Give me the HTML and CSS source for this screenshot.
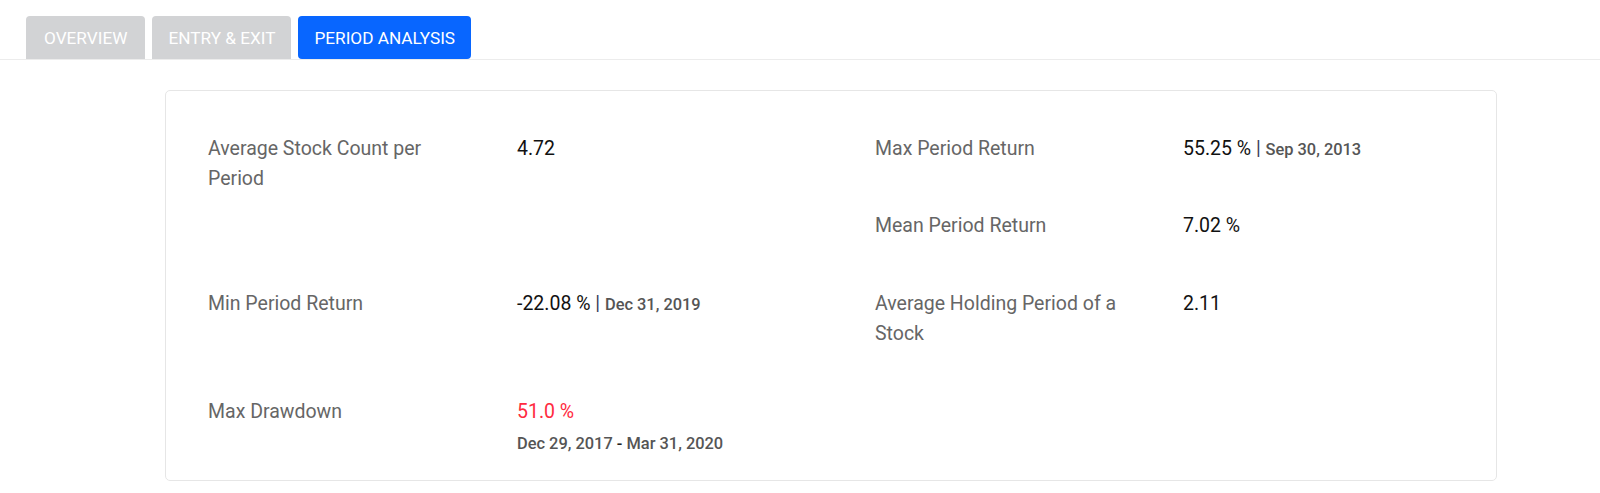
FILE: index.html
```html
<!DOCTYPE html>
<html lang="en">
<head>
<meta charset="utf-8">
<title>Period Analysis</title>
<link rel="stylesheet" href="styles.css">
</head>
<body>
  <nav class="tabs">
    <button class="tab">OVERVIEW</button>
    <button class="tab">ENTRY &amp; EXIT</button>
    <button class="tab tab-active">PERIOD ANALYSIS</button>
  </nav>
  <section class="card">
    <div class="stats">
      <div class="stat stat-l1">
        <div class="label">Average Stock Count per Period</div>
        <div class="value">4.72</div>
      </div>
      <div class="stat stat-r1">
        <div class="label">Max Period Return</div>
        <div class="value">55.25 % <span class="sep">|</span> <span class="date">Sep 30, 2013</span></div>
      </div>
      <div class="stat stat-r2">
        <div class="label">Mean Period Return</div>
        <div class="value">7.02 %</div>
      </div>
      <div class="stat stat-l3">
        <div class="label">Min Period Return</div>
        <div class="value">-22.08 % <span class="sep">|</span> <span class="date">Dec 31, 2019</span></div>
      </div>
      <div class="stat stat-r3">
        <div class="label">Average Holding Period of a Stock</div>
        <div class="value">2.11</div>
      </div>
      <div class="stat stat-l4">
        <div class="label">Max Drawdown</div>
        <div class="value">
          <div class="neg">51.0 %</div>
          <div class="date range">Dec 29, 2017 <span class="dash">-</span> Mar 31, 2020</div>
        </div>
      </div>
    </div>
  </section>
</body>
</html>
```

FILE: styles.css
```css
* { box-sizing: border-box; }

html, body {
  margin: 0;
  padding: 0;
  background: #ffffff;
  font-family: Roboto, "Liberation Sans", Arial, sans-serif;
}

.tabs {
  display: flex;
  gap: 7px;
  padding: 16px 0 0 26px;
  border-bottom: 1px solid #ececec;
}

.tab {
  height: 43px;
  padding: 0 16px;
  border: none;
  border-radius: 4px 4px 0 0;
  background: #d2d3d5;
  color: #ffffff;
  font-family: Roboto, "Liberation Sans", Arial, sans-serif;
  font-size: 17.2px;
  font-weight: 400;
  cursor: pointer;
}

.tab:first-child {
  padding: 0 18px;
}

.tab-active {
  background: #0866ff;
  color: #ffffff;
  border-radius: 4px;
}

.card {
  margin: 30px 103px 0 165px;
  border: 1px solid #e6e6e6;
  border-radius: 5px;
  padding: 43px 43px 20px 42px;
}

.stats {
  display: grid;
  grid-template-columns: 309px 358px 308px 1fr;
  grid-template-rows: 77px 78px 108px auto;
  font-size: 19.5px;
  line-height: 30px;
}

.stat {
  display: contents;
}

.label {
  color: #666666;
}

.value {
  color: #111111;
}

.stat-l1 .label { grid-column: 1; grid-row: 1; padding-right: 40px; }
.stat-l1 .value { grid-column: 2; grid-row: 1; }
.stat-r1 .label { grid-column: 3; grid-row: 1; }
.stat-r1 .value { grid-column: 4; grid-row: 1; }
.stat-r2 .label { grid-column: 3; grid-row: 2; }
.stat-r2 .value { grid-column: 4; grid-row: 2; }
.stat-l3 .label { grid-column: 1; grid-row: 3; }
.stat-l3 .value { grid-column: 2; grid-row: 3; }
.stat-r3 .label { grid-column: 3; grid-row: 3; padding-right: 30px; }
.stat-r3 .value { grid-column: 4; grid-row: 3; }
.stat-l4 .label { grid-column: 1; grid-row: 4; }
.stat-l4 .value { grid-column: 2; grid-row: 4; }

.sep {
  color: #3a3a5a;
  font-size: 19.5px;
}

.date {
  color: #555555;
  font-size: 16.4px;
  font-weight: 500;
}

.neg {
  color: #ff2a40;
}

.range {
  line-height: 33px;
}

.dash {
  color: #222222;
}
```
